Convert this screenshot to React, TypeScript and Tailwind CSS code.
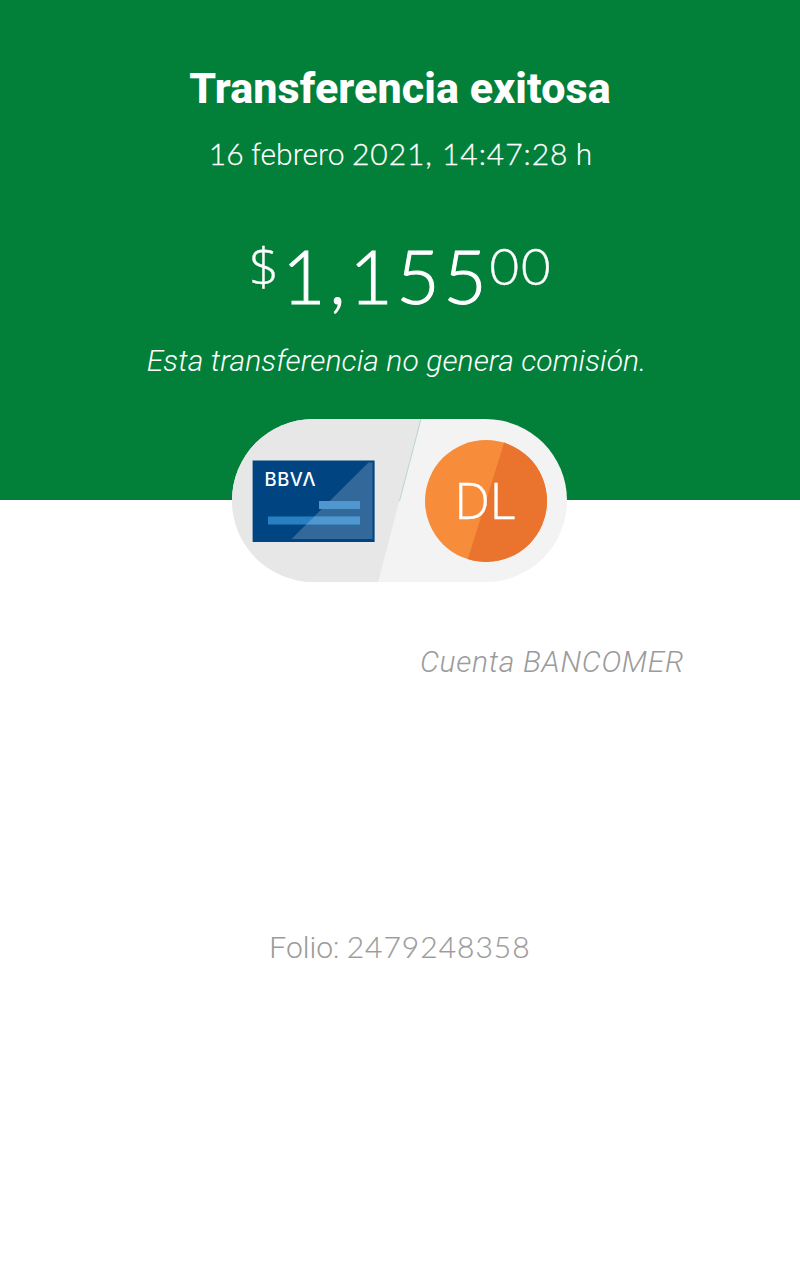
import React from "react";

function CardArt() {
  return (
    <svg className="block h-[82px] w-[123px]" viewBox="0 0 123 82" role="img" aria-label="BBVA">
      <rect x="0.6" y="0.5" width="122" height="81.5" fill="#004481" />
      <path d="M116.5 2.5H120.5V79H39.5Z" fill="#33699a" />
      <rect x="67" y="41" width="41" height="8" fill="#4f97ce" />
      <rect x="16" y="56.5" width="92" height="8" fill="#2680c2" />
      <path d="M62.4 56.5H108V64.5H54.1Z" fill="#4f97ce" />
      <g fill="#ffffff" fontFamily="Inter, sans-serif" fontSize="18.4" fontWeight="500" textAnchor="middle">
        <text x="18.6" y="26">B</text>
        <text x="31.4" y="26">B</text>
        <text x="44.2" y="26">V</text>
        <text x="-57" y="-12.4" transform="rotate(180)">V</text>
      </g>
    </svg>
  );
}

function Avatar({ initials }: { initials: string }) {
  return (
    <div className="relative flex h-[122px] w-[122px] items-center justify-center overflow-hidden rounded-full bg-[#f78c3b]">
      <svg className="absolute inset-0 h-full w-full" viewBox="0 0 122 122" aria-hidden="true">
        <path d="M80 0H122V122H42Z" fill="#ea732d" />
      </svg>
      <span className="relative pr-[2px] pb-[2px] font-['Open_Sans',sans-serif] text-[50px] leading-none font-light text-white [-webkit-text-stroke:0.5px_white]">
        {initials}
      </span>
    </div>
  );
}

export default function App() {
  return (
    <main className="min-h-[1280px] w-full bg-white font-[Roboto,sans-serif] whitespace-nowrap">
      <header className="flex h-[500px] flex-col items-center bg-[#028039] text-white">
        <h1 className="mt-[63px] text-[43px] leading-[50px] font-extrabold tracking-[0.1px]">Transferencia exitosa</h1>
        <p className="mt-[20px] pl-[1px] text-[30px] leading-[40px] font-light">
          <span className="font-[Lato,sans-serif] [-webkit-text-stroke:0.3px_white]">16</span> febrero{" "}
          <span className="font-[Lato,sans-serif] tracking-[0.95px] [-webkit-text-stroke:0.3px_white]">2021, 14:47:28</span> h
        </p>
        <div className="mt-[54px] flex h-[90px] items-start pl-[2px] font-[Lato,sans-serif] font-light">
          <span className="font-['Open_Sans',sans-serif] text-[52px] leading-[71px] [-webkit-text-stroke:0.4px_white]">$</span>
          <span className="ml-[3px] text-[75px] leading-[92px] tracking-[3.6px] [-webkit-text-stroke:1px_white]">1,155</span>
          <span className="-ml-[1px] text-[51px] leading-[73px] tracking-[2px] [-webkit-text-stroke:0.4px_white]">00</span>
        </div>
        <p className="mt-[22px] pr-[7px] text-[30px] leading-[40px] font-light tracking-[0.1px] italic">
          Esta transferencia no genera comisión.
        </p>
      </header>

      <section className="relative -mt-[81px] ml-[232px] flex h-[163px] w-[335px] items-center justify-between overflow-hidden rounded-full bg-[#f3f3f3] px-[20px] pt-[1px]">
        <svg className="absolute inset-0 h-full w-full" viewBox="0 0 335 163" aria-hidden="true">
          <path d="M0 0H189L146 163H0Z" fill="#e7e7e7" />
          <path d="M189 0L167.5 82" stroke="#a9d0cb" strokeWidth="0.8" />
        </svg>
        <div className="relative">
          <CardArt />
        </div>
        <Avatar initials="DL" />
      </section>

      <section className="text-[30px] leading-[40px] font-light text-[#9b9b9b]">
        <p className="pt-[60px] pl-[420px] tracking-[0.7px] italic">Cuenta BANCOMER</p>
        <p className="mt-[244px] text-center">
          Folio: <span className="font-[Lato,sans-serif] tracking-[1px] [-webkit-text-stroke:0.2px_#9b9b9b]">2479248358</span>
        </p>
      </section>
    </main>
  );
}
